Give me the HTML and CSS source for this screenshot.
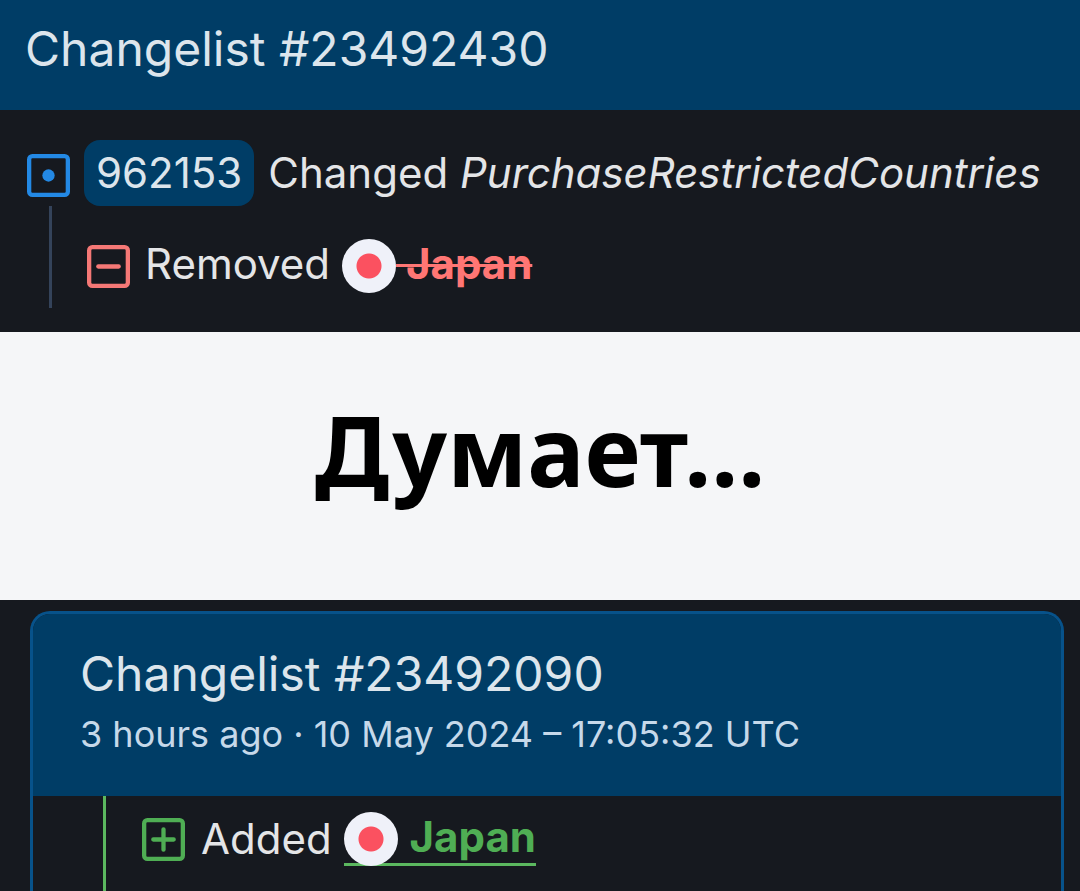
FILE: index.html
```
<!DOCTYPE html>
<html lang="en">
<head>
<meta charset="utf-8">
<title>Changelists</title>
<link rel="stylesheet" href="styles.css">
</head>
<body>
<main>
  <section class="removed-panel">
    <header class="banner"><h1 class="title">Changelist #23492430</h1></header>
    <div class="change">
      <svg class="icon icon-modified" viewBox="0 0 16 16" aria-hidden="true"><rect x="0.8" y="0.8" width="14.4" height="14.4" rx="1.2" fill="none" stroke="currentColor" stroke-width="1.6"/><circle cx="8" cy="8" r="2.3" fill="currentColor"/></svg>
      <a class="app-id" href="#app">962153</a>
      <span>Changed <i>PurchaseRestrictedCountries</i></span>
    </div>
    <div class="branch">
      <svg class="icon icon-removed" viewBox="0 0 16 16" aria-hidden="true"><rect x="0.8" y="0.8" width="14.4" height="14.4" rx="1.2" fill="none" stroke="currentColor" stroke-width="1.6"/><path d="M4.2 8h7.6" stroke="currentColor" stroke-width="1.6" stroke-linecap="round"/></svg>
      <span class="action">Removed</span>
      <del class="country"><span class="flag"></span><b>&nbsp;Japan</b></del>
    </div>
  </section>
  <section class="caption"><p lang="ru">Думает...</p></section>
  <section class="added-panel">
    <article class="card">
      <header class="card-head">
        <h2 class="title">Changelist #23492090</h2>
        <p class="meta">3 hours ago · 10 May 2024 – 17:05:32 UTC</p>
      </header>
      <div class="card-branch">
        <svg class="icon icon-added" viewBox="0 0 16 16" aria-hidden="true"><rect x="0.8" y="0.8" width="14.4" height="14.4" rx="1.2" fill="none" stroke="currentColor" stroke-width="1.6"/><path d="M4.2 8h7.6M8 4.2v7.6" stroke="currentColor" stroke-width="1.6" stroke-linecap="round"/></svg>
        <span class="action">Added</span>
        <ins class="country"><span class="flag"></span><b>&nbsp;Japan</b></ins>
      </div>
    </article>
  </section>
</main>
</body>
</html>
```
FILE: styles.css
```
* { box-sizing: border-box; }
body { margin: 0; background: #16191f; color: #e4e5e7; font: 42px/54px Inter, sans-serif; }
main { display: flex; flex-direction: column; min-height: 100vh; }
h1, h2, p { margin: 0; }
.banner { background: #003d66; padding: 19px 25px 31px; }
.title { font-size: 48px; line-height: 60px; font-weight: 400; color: #dce5ec; }
.removed-panel { padding-bottom: 24px; }
.change { display: flex; align-items: center; gap: 14px; padding: 30px 27px 0; white-space: nowrap; }
.app-id { background: #003d66; color: #dce5ec; text-decoration: none; border-radius: 16px; padding: 6px 12px; }
.icon { width: 43px; height: 43px; flex: none; }
.icon-modified { color: #2389e5; margin-top: 5px; }
.icon-removed { color: #f57876; }
.icon-added { color: #4fae54; }
.branch { display: flex; align-items: center; height: 102px; margin-left: 49px; padding: 18px 0 0 35px; border-left: 3px solid #34435a; }
.action { margin: 0 12px 0 15px; }
.branch .action { padding-bottom: 5px; }
.country { display: flex; align-items: flex-start; text-decoration: none; }
.country b { line-height: 50px; }
.flag { flex: none; width: 54px; height: 54px; border-radius: 50%; background: radial-gradient(circle, #fb5160 12px, #eff1f9 13px); }
del { color: #ff7674; }
del b { text-decoration: line-through; text-decoration-thickness: 3px; }
ins { color: #4fae54; border-bottom: 3px solid #5bb85f; }
ins .flag { margin-bottom: -3px; }
ins b { padding-left: 2px; }
.caption { background: #f5f6f8; color: #000; text-align: center; padding: 58px 16px 90px; font: 700 96px/120px "Noto Sans", sans-serif; }
.added-panel { flex: 1; display: flex; padding: 11px 16px 0 30px; }
.card { flex: 1; display: flex; flex-direction: column; border: 3px solid #07528a; border-bottom: 0; border-radius: 20px 20px 0 0; overflow: hidden; }
.card-head { background: #003d66; padding: 30px 47px 32px; }
.meta { font-size: 36px; line-height: 60px; color: #c6d9ea; }
.card-branch { flex: 1; display: flex; align-items: flex-start; margin-left: 70px; padding: 16px 0 0 36px; border-left: 3px solid #5bb85f; }
.card-branch .icon { margin-top: 6px; }
.card-branch .action { margin-left: 16px; }
```
